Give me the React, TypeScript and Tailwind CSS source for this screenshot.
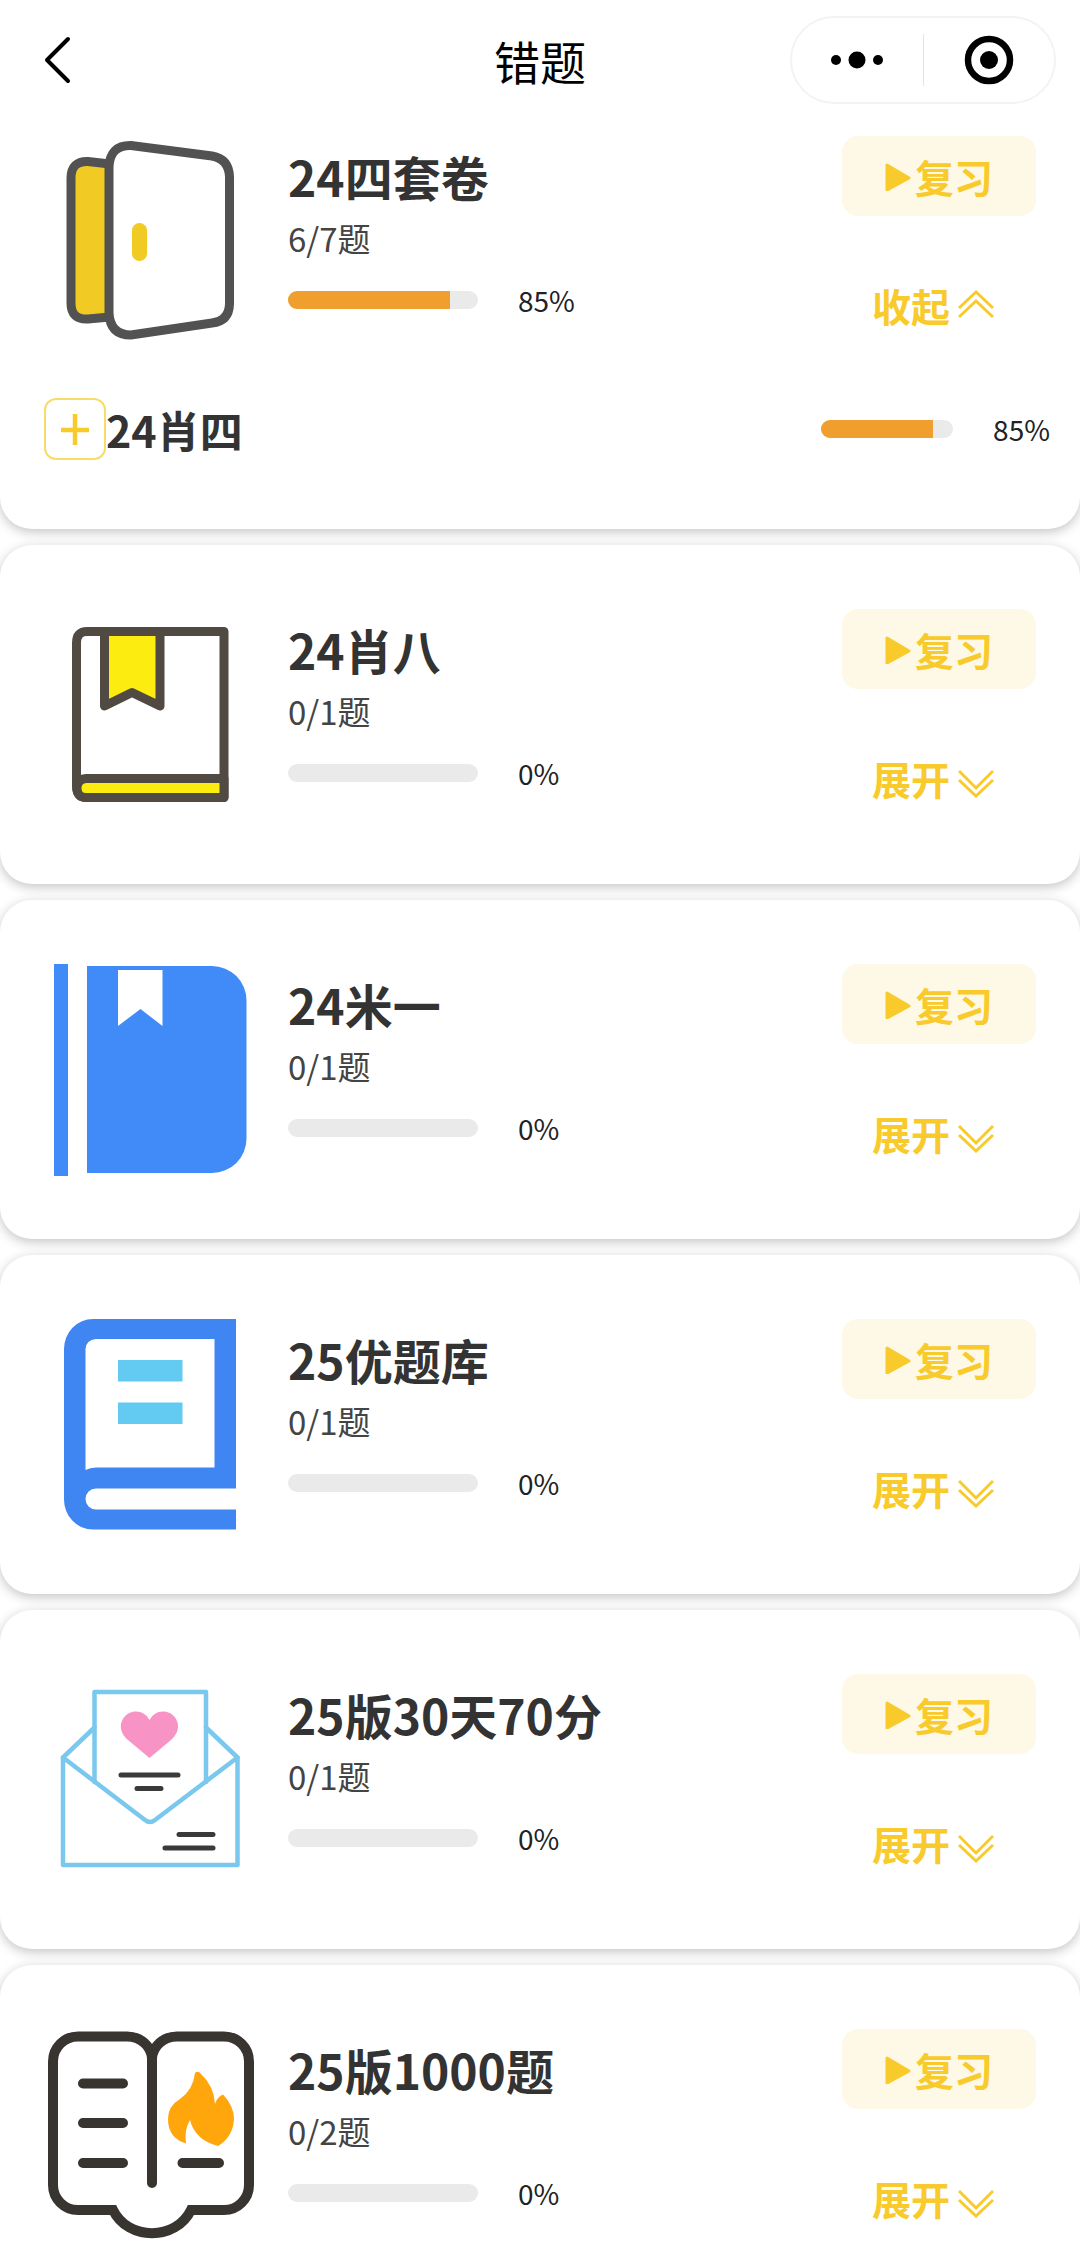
import { useState } from 'react';
import type { ReactNode } from 'react';

interface Section {
  name: string;
  percent: number;
}

interface Book {
  name: string;
  done: number;
  total: number;
  percent: number;
  icon: ReactNode;
  sections: Section[];
}

const doorIcon = (
  <>
    <path d="M66 28 L44 25.500 Q27 25 27 42 V167 Q27 184 44 183 L66 181" fill="#f1ca23" stroke="#525252" strokeWidth="9" />
    <path
      d="M65 31 Q66 9 87 9.500 L168 20 Q185 23 185.500 41 V168 Q185 185 168 187 L87 199 Q66 199 65 177 Z"
      fill="#fff"
      stroke="#525252"
      strokeWidth="9"
    />
    <rect x="88" y="87" width="15" height="38" rx="7.500" fill="#f1ca23" />
  </>
);

const bookmarkIcon = (
  <g stroke="#514a42" strokeWidth="9" strokeLinejoin="round">
    <path d="M180 22.500 H43 Q32.500 22.500 32.500 34 V177 Q32.500 188.500 43 188.500 H180 Z" fill="#fff" />
    <path d="M180 169.500 H42 Q33 170 33 179 Q33 188.500 42 188.500 H180 Z" fill="#fdec10" />
    <path d="M60.500 22.500 V97 L88 83.500 L116 97 V22.500 Z" fill="#fdec10" />
  </g>
);

const blueBookIcon = (
  <g fill="#418bf9">
    <rect x="10" y="0" width="14" height="212" />
    <path d="M43 2 H168 A34.500 34.500 0 0 1 202.500 36.500 V174.500 A34.500 34.500 0 0 1 168 209 H43 Z" />
    <path d="M74 6 H118.500 V62 L96.500 45 L74 62 Z" fill="#fff" />
  </g>
);

const notebookIcon = (
  <>
    <path
      d="M192 0 H49 A29 30 0 0 0 20 30 V180 A29 30 0 0 0 49 210.500 H192 V190.500 H52 A10.500 10.500 0 0 1 52 169.500 H192 Z M170.500 20 V148.500 H52 Q46 148.500 41.500 151 V30 Q42 21 52 20 Z"
      fill="#3f86f3"
      fillRule="evenodd"
    />
    <rect x="74" y="41" width="64.500" height="21.500" fill="#63cbf1" />
    <rect x="74" y="83.500" width="64.500" height="21.500" fill="#63cbf1" />
  </>
);

const letterIcon = (
  <g fill="none" strokeWidth="4.500" strokeLinejoin="round" strokeLinecap="round">
    <path d="M50.500 53.500 L19 83.500 V191 H193.500 V83.500 L162 53.500" stroke="#7ac8ee" />
    <path d="M50.500 108 V18 H162 V108" stroke="#7ac8ee" />
    <path d="M19 83.500 L101 146 Q106 150 111 146 L193.500 83.500" stroke="#7ac8ee" />
    <path d="M105.500 84 L84 66 C70 54 79 38 91 37.500 Q101 37 105.500 46 Q110 37 120 37.500 C132 38 141 54 127 66 Z" fill="#f893c6" />
    <path d="M77 101 H134 M93 114.500 H117 M135 160.500 H169 M121 174 H169" stroke="#3a3a3a" strokeWidth="5" />
  </g>
);

const openBookIcon = (
  <g fill="none" stroke="#383430" strokeWidth="10" strokeLinecap="round">
    <path d="M108 30 A25 23 0 0 0 83 7.500 H34 A25 25 0 0 0 9 32.500 V156 A25 25 0 0 0 34 181 H69 C84 212 132 212 147 181 H180 A25 25 0 0 0 205 156 V32.500 A25 25 0 0 0 180 7.500 H133 A25 23 0 0 0 108 30 V154" />
    <path d="M39 54.500 H79 M39 94 H79 M39 134 H79 M138.500 134 H175" />
    <path
      d="M151 44 Q154 41 157 45 Q170 57 171 75 Q173 68 179 65.500 Q190 77 190 90 Q189 108 174 117 Q151 111 146 91 Q140 101 142 114.500 Q124 109 124 90 Q124 77 136 70 Q149 61 151 44 Z"
      fill="#fea60c"
      stroke="none"
    />
  </g>
);

const books: Book[] = [
  { name: '24四套卷', done: 6, total: 7, percent: 85, icon: doorIcon, sections: [{ name: '24肖四', percent: 85 }] },
  { name: '24肖八', done: 0, total: 1, percent: 0, icon: bookmarkIcon, sections: [] },
  { name: '24米一', done: 0, total: 1, percent: 0, icon: blueBookIcon, sections: [] },
  { name: '25优题库', done: 0, total: 1, percent: 0, icon: notebookIcon, sections: [] },
  { name: '25版30天70分', done: 0, total: 1, percent: 0, icon: letterIcon, sections: [] },
  { name: '25版1000题', done: 0, total: 2, percent: 0, icon: openBookIcon, sections: [] },
];

function Progress({ percent, label, small }: { percent: number; label: string; small?: boolean }) {
  return (
    <div className="flex items-center gap-10">
      <div
        role="progressbar"
        aria-label={label}
        aria-valuenow={percent}
        className={`h-[18px] overflow-hidden rounded-full bg-[#eaeaea] ${small ? 'w-[132px]' : 'w-[190px]'}`}
      >
        <div className="h-full bg-[#f09f2f]" style={{ width: `${percent}%` }} />
      </div>
      <span className="text-[28px] leading-10 text-[#222]">{percent}%</span>
    </div>
  );
}

function Header() {
  return (
    <header className="sticky top-0 z-10 flex h-[120px] items-center justify-between bg-white px-6">
      <div className="flex-1">
        <button type="button" aria-label="返回" className="ml-4 block">
          <svg width="36" height="52" viewBox="0 0 36 52" fill="none" stroke="#000" strokeWidth="4" strokeLinecap="round" strokeLinejoin="round">
            <path d="M28 5 L7 26 L28 47" />
          </svg>
        </button>
      </div>
      <h1 className="text-[46px] leading-[60px] text-black">错题</h1>
      <div className="flex flex-1 justify-end">
        <div className="flex h-[88px] w-[266px] items-center rounded-full border-2 border-[#f3f3f3]">
          <button type="button" aria-label="更多" className="flex flex-1 justify-center">
            <svg width="54" height="20" viewBox="0 0 54 20">
              <circle cx="6" cy="10" r="5" />
              <circle cx="27" cy="10" r="8.500" />
              <circle cx="48" cy="10" r="5" />
            </svg>
          </button>
          <div className="h-[52px] w-px bg-[#e4e4e4]" />
          <button type="button" aria-label="关闭" className="flex flex-1 justify-center">
            <svg width="50" height="50" viewBox="0 0 50 50">
              <circle cx="25" cy="25" r="21" fill="none" stroke="#000" strokeWidth="6.500" />
              <circle cx="25" cy="25" r="9" />
            </svg>
          </button>
        </div>
      </div>
    </header>
  );
}

function BookCard({ book, defaultOpen }: { book: Book; defaultOpen: boolean }) {
  const [open, setOpen] = useState(defaultOpen);

  return (
    <article className="rounded-[32px] bg-white pb-[63px] pt-16 shadow-[0_3px_12px_rgba(0,0,0,0.24)]">
      <div className="flex items-start px-11">
        <svg className="mr-8 shrink-0" width="212" height="212" viewBox="0 0 212 212" aria-hidden="true">
          {book.icon}
        </svg>
        <div className="flex-1 pt-3">
          <h2 className="text-[48px] font-bold leading-[56px] text-[#333]">{book.name}</h2>
          <p className="mb-5 mt-3 text-[33px] leading-[44px] text-[#444]">
            {book.done}/{book.total}题
          </p>
          <Progress percent={book.percent} label={book.name} />
        </div>
        <div className="flex w-[194px] shrink-0 flex-col gap-[69px] text-[39px] font-bold leading-10 text-[#f8ca2b]">
          <button type="button" className="flex h-20 items-center justify-center gap-1 rounded-2xl bg-[#fef9e6]">
            <svg width="26" height="30" viewBox="0 0 26 30" fill="currentColor" stroke="currentColor" strokeWidth="3" strokeLinejoin="round">
              <path d="M2 4 L24 17 L2 29 Z" />
            </svg>
            复习
          </button>
          <button type="button" onClick={() => setOpen(!open)} className="flex items-center justify-center gap-2 pr-3">
            {open ? '收起' : '展开'}
            <svg width="36" height="40" viewBox="0 0 36 40" fill="none" stroke="currentColor" strokeWidth="3">
              {open ? <path d="M1 23 L18 7 L35 23 M1 32 L18 16 L35 32" /> : <path d="M1 13 L18 30 L35 13 M1 22 L18 38 L35 22" />}
            </svg>
          </button>
        </div>
      </div>

      {open &&
        book.sections.map(section => (
          <div key={section.name} className="flex items-center pb-1.5 pl-11 pr-[30px] pt-[50px]">
            <button
              type="button"
              aria-label={`展开${section.name}`}
              className="flex h-[62px] w-[62px] items-center justify-center rounded-xl border-2 border-[#f8dc6a]"
            >
              <svg width="32" height="32" viewBox="0 0 32 32" stroke="#f8ca2b" strokeWidth="4.500">
                <path d="M2 17 H30 M16 1 V32" />
              </svg>
            </button>
            <h3 className="flex-1 text-[43px] font-bold leading-[60px] text-[#333]">{section.name}</h3>
            <Progress percent={section.percent} label={section.name} small />
          </div>
        ))}
    </article>
  );
}

export default function App() {
  return (
    <div className="min-h-screen bg-white font-['Noto_Sans_CJK_SC',sans-serif]">
      <Header />
      {/* list starts scrolled a little way under the header */}
      <main className="-mt-12 flex flex-col gap-4">
        {books.map((book, i) => (
          <BookCard key={book.name} book={book} defaultOpen={i === 0} />
        ))}
      </main>
    </div>
  );
}
